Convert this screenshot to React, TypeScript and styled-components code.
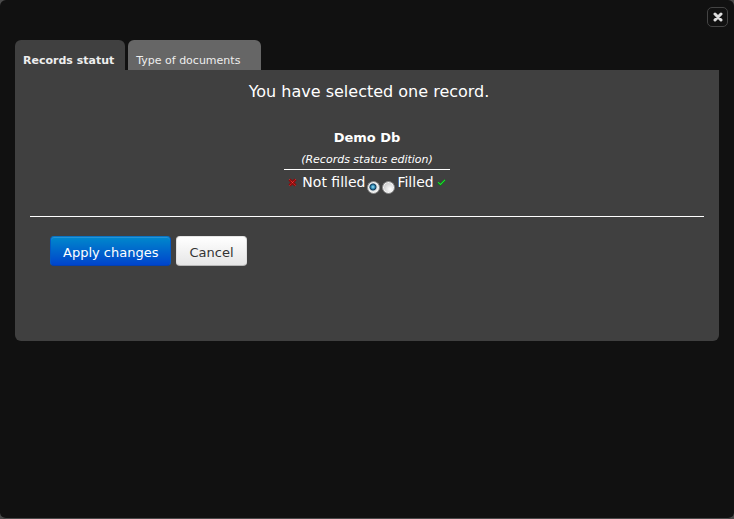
import React, { useState } from "react";
import styled, { createGlobalStyle, css } from "styled-components";

const GlobalStyle = createGlobalStyle`
  *, *::before, *::after { box-sizing: border-box; }
  body {
    margin: 0;
    background: #4a4a4a;
    color: #fff;
    font-family: Verdana, "DejaVu Sans", sans-serif;
    font-size: 13px;
  }
`;

const Dialog = styled.main`
  display: flex;
  flex-direction: column;
  min-height: 100vh;
  padding: 7px 15px 15px 15px;
  background: #111;
  border-bottom: 1px solid #4a4a4a;
  border-radius: 6px;
`;

const DialogHeader = styled.header`
  display: flex;
  justify-content: flex-end;
  height: 33px;
  margin-right: -9px;
`;

const CloseButton = styled.button`
  display: flex;
  align-items: center;
  justify-content: center;
  width: 21px;
  height: 20px;
  padding: 0 0 0 1px;
  background: #111;
  border: 1px solid #444;
  border-radius: 5px;
  cursor: pointer;
`;

const TabList = styled.div`
  display: flex;
  gap: 3px;
`;

const Tab = styled.button<{ $active: boolean }>`
  height: 30px;
  padding: 11px 21px 0 8px;
  border: 0;
  border-radius: 6px 6px 0 0;
  background: #666;
  color: #eee;
  font: 11px/18px Verdana, "DejaVu Sans", sans-serif;
  white-space: nowrap;
  cursor: pointer;
  ${(p) =>
    p.$active &&
    css`
      padding-right: 11px;
      background: #404040;
      font-weight: bold;
    `}
`;

const Panel = styled.section`
  padding: 11px 15px 75px;
  background: #404040;
  border-radius: 0 0 6px 6px;
`;

const Title = styled.h1`
  margin: 0 0 24px;
  padding-left: 4px;
  font-size: 16px;
  line-height: 22px;
  font-weight: normal;
  text-align: center;
`;

const StatusBlock = styled.div`
  display: flex;
  flex-direction: column;
  align-items: center;
`;

const DatabaseName = styled.h2`
  margin: 0;
  font-size: 13px;
  line-height: 22px;
`;

const StatusTable = styled.table`
  border-collapse: collapse;
`;

const StatusHeading = styled.th`
  padding: 2px 0 0;
  border-bottom: 1px solid #fff;
  font-size: 11px;
  line-height: 18px;
  font-weight: normal;
  font-style: italic;
`;

const StatusCell = styled.td`
  padding: 0 4px;
`;

const Choices = styled.div`
  display: flex;
  align-items: center;
  gap: 2px;
  height: 24px;
`;

const Choice = styled.label`
  display: flex;
  align-items: center;
  gap: 2px;
  font-size: 14px;
  line-height: 24px;
  white-space: nowrap;
  svg:first-child { margin-right: 3px; }
  svg:last-child { margin-left: 1px; }
`;

const Radio = styled.input`
  appearance: none;
  width: 13px;
  height: 13px;
  margin: 11px 0 0;
  border: 1px solid #888;
  border-radius: 50%;
  background: radial-gradient(circle at 65% 65%, #fff 0, #d4d4d4 60%, #b8b8b8 75%);
  box-shadow: inset 0 0 0 1px #f4f4f4;
  &:checked {
    background: radial-gradient(circle at 45% 45%, #a0e8fc 0, #2a82ad 2px, #123c5a 3px, #d8dde0 4px, #eee 5px);
  }
`;

const Divider = styled.hr`
  width: 100%;
  height: 1px;
  margin: 22px 0 19px;
  border: 0;
  background: #fff;
`;

const Actions = styled.div`
  display: flex;
  gap: 5px;
  padding-left: 20px;
`;

const Button = styled.button<{ $primary?: boolean }>`
  height: 30px;
  padding: 3px 12px 0;
  border: 1px solid #ccc;
  border-color: #e6e6e6 #e0e0e0 #b8b8b8;
  border-radius: 4px;
  background: linear-gradient(#fff, #e6e6e6);
  color: #333;
  font: 13px/20px Verdana, "DejaVu Sans", sans-serif;
  white-space: nowrap;
  cursor: pointer;
  ${(p) =>
    p.$primary &&
    css`
      border-color: #0a74c4 #0458c4 #0340b0;
      background: linear-gradient(#0088cc, #0044cc);
      box-shadow: inset 0 1px 0 #2694d4;
      color: #fff;
    `}
`;

const CloseIcon = () => (
  <svg width="10" height="10" viewBox="0 0 10 10" aria-hidden="true">
    <path d="M2 2L8 8M8 2L2 8" stroke="#ddd" strokeWidth="3" strokeLinecap="round" />
  </svg>
);

const CrossIcon = () => (
  <svg width="9" height="9" viewBox="0 0 9 9" aria-hidden="true">
    <path d="M1.5 1.5L7.5 7.5M7.5 1.5L1.5 7.5" stroke="#8c0c0c" strokeWidth="3" />
    <path d="M1.5 1.5L7.5 7.5M7.5 1.5L1.5 7.5" stroke="#f44" strokeWidth="1" strokeDasharray="1 1" />
  </svg>
);

const CheckIcon = () => (
  <svg width="9" height="9" viewBox="0 0 9 9" aria-hidden="true">
    <path d="M1 4.5L3.5 6.8L8 2" fill="none" stroke="#0a7414" strokeWidth="2" />
    <path d="M1 4.2L3.5 6.4L8 1.8" fill="none" stroke="#20d832" strokeWidth="1.1" />
  </svg>
);

export default function App() {
  const [tab, setTab] = useState("status");
  const [filled, setFilled] = useState(false);

  return (
    <>
      <GlobalStyle />
      <Dialog>
        <DialogHeader>
          <CloseButton type="button" aria-label="Close">
            <CloseIcon />
          </CloseButton>
        </DialogHeader>
        <TabList role="tablist">
          <Tab type="button" role="tab" aria-selected={tab === "status"} $active={tab === "status"} onClick={() => setTab("status")}>
            Records statut
          </Tab>
          <Tab type="button" role="tab" aria-selected={tab === "types"} $active={tab === "types"} onClick={() => setTab("types")}>
            Type of documents
          </Tab>
        </TabList>
        <Panel role="tabpanel">
          <Title>You have selected one record.</Title>
          <StatusBlock>
            <DatabaseName>Demo Db</DatabaseName>
            <StatusTable>
              <thead>
                <tr>
                  <StatusHeading scope="col">(Records status edition)</StatusHeading>
                </tr>
              </thead>
              <tbody>
                <tr>
                  <StatusCell>
                    <Choices>
                      <Choice>
                        <CrossIcon />
                        Not filled
                        <Radio type="radio" name="filled" checked={!filled} onChange={() => setFilled(false)} />
                      </Choice>
                      <Choice>
                        <Radio type="radio" name="filled" checked={filled} onChange={() => setFilled(true)} />
                        Filled
                        <CheckIcon />
                      </Choice>
                    </Choices>
                  </StatusCell>
                </tr>
              </tbody>
            </StatusTable>
          </StatusBlock>
          <Divider />
          <Actions>
            <Button type="button" $primary>Apply changes</Button>
            <Button type="button">Cancel</Button>
          </Actions>
        </Panel>
      </Dialog>
    </>
  );
}
